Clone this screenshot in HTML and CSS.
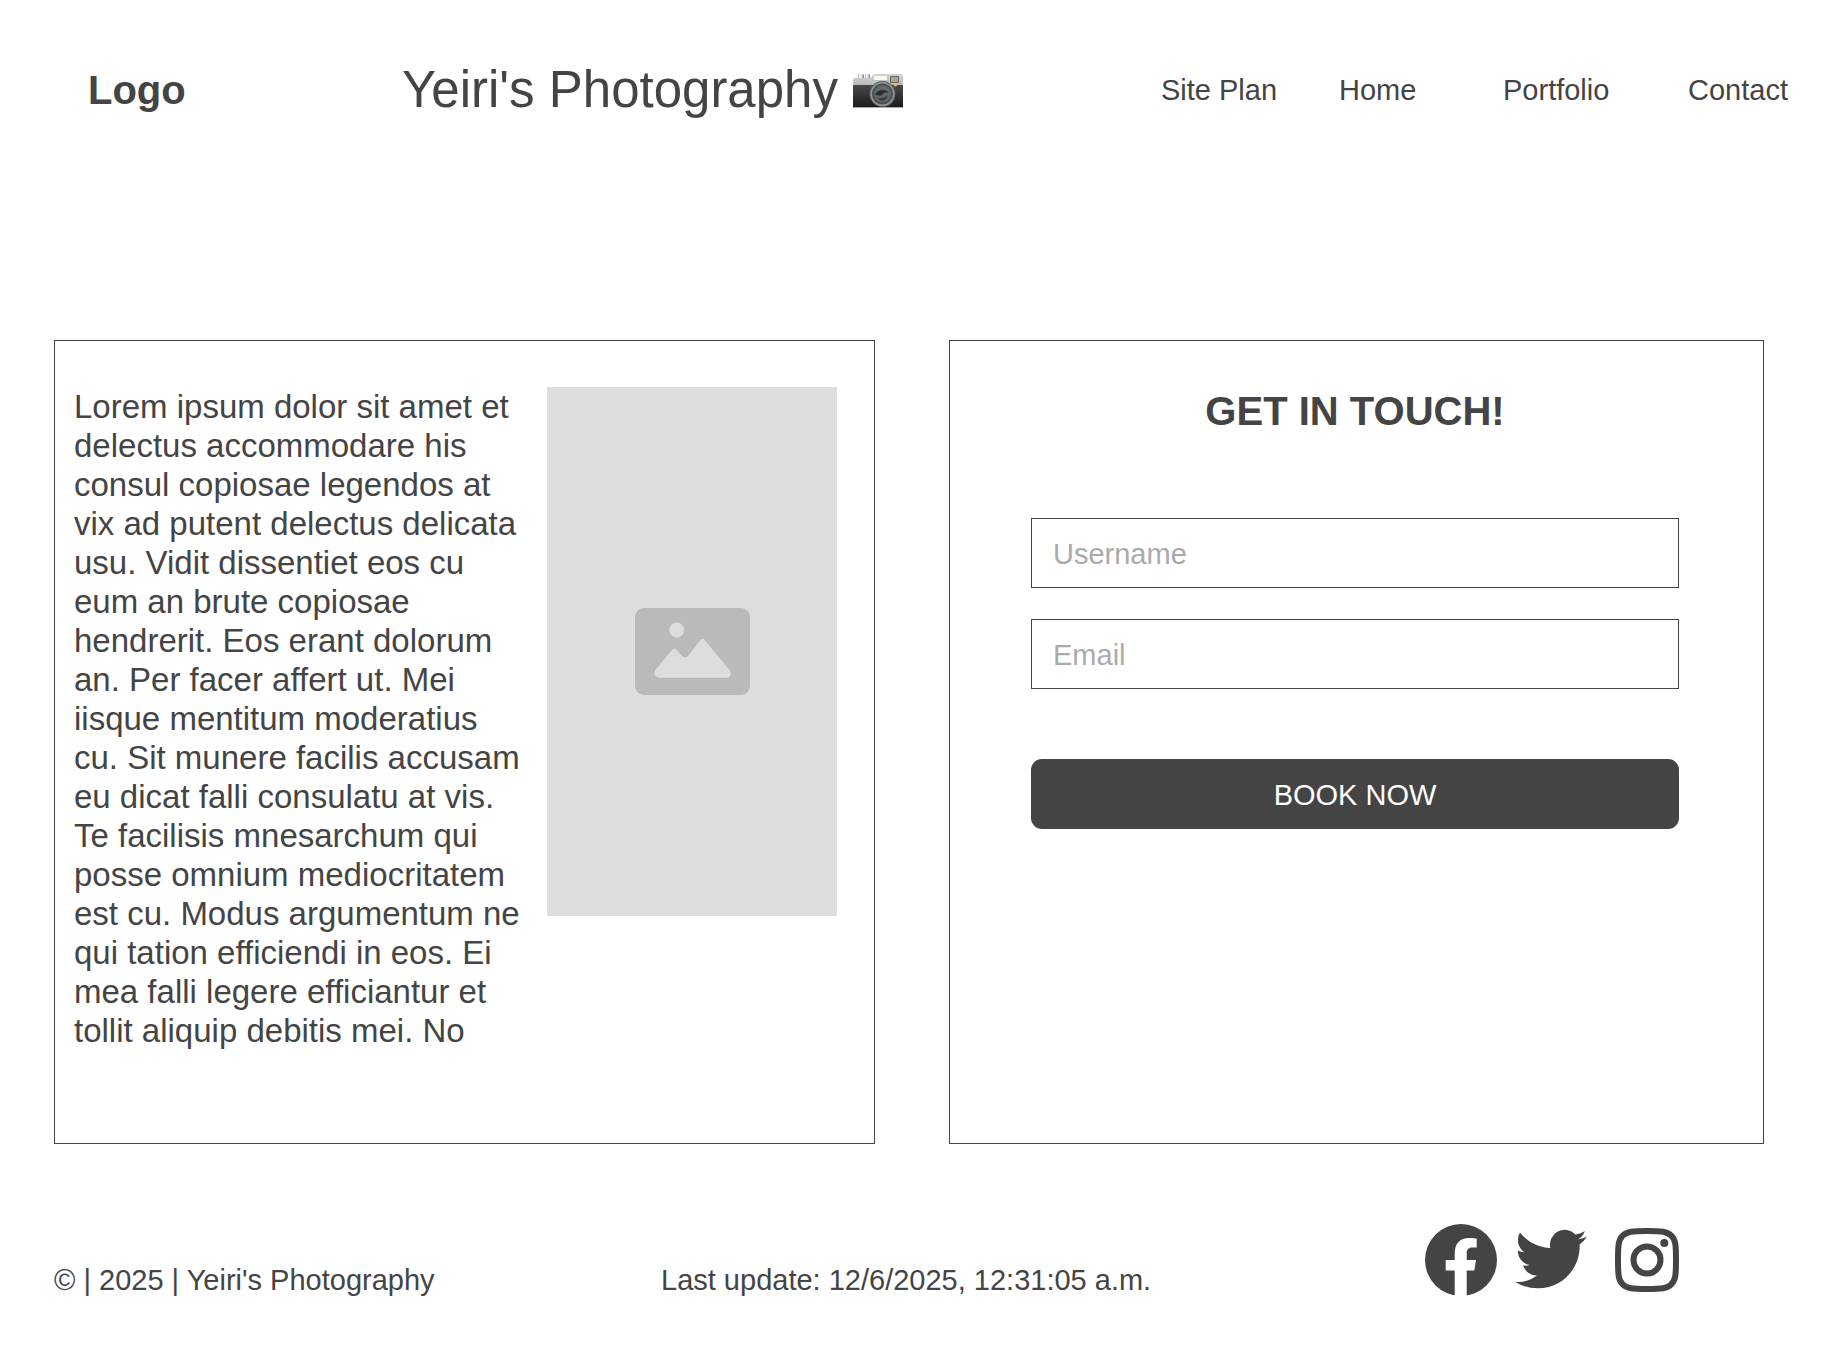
FILE: index.html
```html
<!DOCTYPE html>
<html lang="en">
<head>
<meta charset="utf-8">
<meta name="viewport" content="width=device-width, initial-scale=1">
<title>Yeiri's Photography</title>
<link rel="stylesheet" href="styles.css">
</head>
<body>
<header class="site-header">
  <a class="logo" href="#">Logo</a>
  <h1 class="site-title">Yeiri's Photography
    <svg class="camera" viewBox="0 0 50 34" aria-hidden="true">
      <defs>
        <linearGradient id="chrome" x1="0" y1="0" x2="0" y2="1"><stop offset="0" stop-color="#d4d5d6"/><stop offset="1" stop-color="#b4b6b7"/></linearGradient>
        <linearGradient id="leather" x1="0" y1="0" x2="0" y2="1"><stop offset="0" stop-color="#484848"/><stop offset="1" stop-color="#1a1a1a"/></linearGradient>
      </defs>
      <path fill="url(#chrome)" d="M0 6Q0 4 2 4H17L20 1Q21 0 23 0H48Q50 0 50 2V12H0Z"/>
      <path fill="#b9bbbc" d="M5 0h6v4H5zM12 0h5v4h-5z"/>
      <path fill="#ececec" d="M6 0h3v4H6zM13 0h2v4h-2z"/>
      <path fill="#8b8d8e" d="M10 1h1v3h-1zM16 1h1v3h-1z"/>
      <rect y="11" width="50" height="23" rx="1" fill="url(#leather)"/>
      <path fill="#a8a8a8" d="M0 33h50v1H0z"/>
      <rect x="21" y="2" width="13" height="4" rx="1" fill="#fbf8ec"/>
      <rect x="37" y="2" width="9" height="7" rx="1" fill="#6b6561"/>
      <rect x="38" y="3" width="7" height="5" fill="#aaa39d"/>
      <circle cx="29.500" cy="20" r="13" fill="#5e6264"/>
      <circle cx="29.500" cy="20" r="12" fill="#8f9395"/>
      <circle cx="29.500" cy="20" r="10.500" fill="#4b4f51"/>
      <circle cx="29.500" cy="20" r="8.500" fill="#64696c"/>
      <path d="M22 20q6-7 14-2q-5 0-7 3q-3 2-7-1z" fill="#2a2d2f"/>
      <path d="M24 23q6 3 11-2q-2 6-6 6q-4-1-5-4z" fill="#3b3f41"/>
      <circle cx="42.500" cy="11" r="1.500" fill="#f5bd2d"/>
    </svg>
  </h1>
  <nav class="site-nav" aria-label="Main">
    <a href="#">Site Plan</a>
    <a href="#">Home</a>
    <a href="#">Portfolio</a>
    <a href="#">Contact</a>
  </nav>
</header>

<main class="panels">
  <section class="panel about">
    <p class="about-text">Lorem ipsum dolor sit amet et delectus accommodare his consul copiosae legendos at vix ad putent delectus delicata usu. Vidit dissentiet eos cu eum an brute copiosae hendrerit. Eos erant dolorum an. Per facer affert ut. Mei iisque mentitum moderatius cu. Sit munere facilis accusam eu dicat falli consulatu at vis. Te facilisis mnesarchum qui posse omnium mediocritatem est cu. Modus argumentum ne qui tation efficiendi in eos. Ei mea falli legere efficiantur et tollit aliquip debitis mei. No</p>
    <div class="picture" role="img" aria-label="Image placeholder">
      <svg class="picture-icon" viewBox="0 0 115 87" aria-hidden="true">
        <rect width="115" height="87" rx="9" fill="#bababa"/>
        <circle cx="41.700" cy="22" r="7.400" fill="#ddd"/>
        <path fill="#ddd" d="M20 62.500L37 42Q39.300 39 41.600 42L47.500 48.500Q50 50.500 52.500 48.500L65 32.500Q67.400 29 70 32.500L95 62.500Q97.500 67 93 69.700H23.500Q17.500 68 20 62.500Z"/>
      </svg>
    </div>
  </section>

  <section class="panel contact">
    <h2 class="contact-title">GET IN TOUCH!</h2>
    <form class="contact-form">
      <input class="field" type="text" name="username" placeholder="Username" aria-label="Username">
      <input class="field" type="email" name="email" placeholder="Email" aria-label="Email">
      <button class="submit" type="button">BOOK NOW</button>
    </form>
  </section>
</main>

<footer class="site-footer">
  <p>© | 2025 | Yeiri's Photography</p>
  <p>Last update: 12/6/2025, 12:31:05 a.m.</p>
  <div class="social">
    <a href="#" aria-label="Facebook">
      <svg width="72" height="72" viewBox="0 0 72 72">
        <circle cx="36" cy="36" r="36" fill="#444"/>
        <path fill="#fff" d="M29.700 72V46.500H20.700V36H29.700V30C29.700 19 35 14 44 14C47 14 50 14.300 51.700 14.600V23.400H47.500C43 23.400 41.700 26 41.700 29V36H51L49.300 46.500H41.700V72Z"/>
      </svg>
    </a>
    <a href="#" aria-label="Twitter">
      <svg width="72" height="72" viewBox="0 0.300 24 24">
        <path fill="#444" d="M23.953 4.570a10 10 0 0 1-2.825.775 4.958 4.958 0 0 0 2.163-2.723c-.951.555-2.005.959-3.127 1.184a4.920 4.920 0 0 0-8.384 4.482C7.690 8.095 4.067 6.130 1.640 3.162a4.822 4.822 0 0 0-.666 2.475c0 1.710.870 3.213 2.188 4.096a4.904 4.904 0 0 1-2.228-.616v.060a4.923 4.923 0 0 0 3.946 4.827 4.996 4.996 0 0 1-2.212.085 4.936 4.936 0 0 0 4.604 3.417 9.867 9.867 0 0 1-6.102 2.105c-.390 0-.779-.023-1.170-.067a13.995 13.995 0 0 0 7.557 2.209c9.053 0 13.998-7.496 13.998-13.985 0-.210 0-.420-.015-.630A9.935 9.935 0 0 0 24 4.590z"/>
      </svg>
    </a>
    <a href="#" aria-label="Instagram">
      <svg width="84" height="72" viewBox="-10 -4 84 72" fill="none" stroke="#444" stroke-width="6">
        <path d="M32 3C47 3 52 3.400 56.300 7.700C60.600 12 61 17 61 32C61 47 60.600 52 56.300 56.300C52 60.600 47 61 32 61C17 61 12 60.600 7.700 56.300C3.400 52 3 47 3 32C3 17 3.400 12 7.700 7.700C12 3.400 17 3 32 3Z"/>
        <circle cx="32" cy="32" r="13.500"/>
        <circle cx="49.300" cy="15" r="4" fill="#444" stroke="none"/>
      </svg>
    </a>
  </div>
</footer>
</body>
</html>
```
FILE: styles.css
```css
*,
*::before,
*::after {
  box-sizing: border-box;
}

body {
  margin: 0;
  background: #fff;
  color: #444;
  font-family: "Liberation Sans", Arial, sans-serif;
  font-size: 29px;
  line-height: 32px;
}

a {
  color: inherit;
  text-decoration: none;
}

h1,
h2,
p {
  margin: 0;
}

/* Header */
.site-header {
  display: grid;
  grid-template-columns: 314fr 759fr 629fr;
  align-items: center;
  padding: 61px 48px 59px 88px;
}

.logo {
  font-size: 40px;
  font-weight: bold;
  line-height: 46px;
}

.site-title {
  display: flex;
  align-items: center;
  gap: 15px;
  font-size: 51px;
  font-weight: normal;
  line-height: 58px;
  white-space: nowrap;
}

.camera {
  width: 50px;
  height: 34px;
  margin-top: 2px;
}

.site-nav {
  display: grid;
  grid-template-columns: 178fr 164fr 185fr 102fr;
  white-space: nowrap;
}

/* Panels */
.panels {
  display: grid;
  grid-template-columns: 821fr 815fr;
  gap: 74px;
  padding: 162px 74px 80px 54px;
}

.panel {
  min-height: 804px;
  border: 1px solid #444;
}

.about {
  display: grid;
  grid-template-columns: 1fr 290px;
  align-items: start;
  gap: 20px;
  padding: 46px 37px 46px 19px;
}

.about-text {
  font-size: 33px;
  line-height: 39px;
}

.picture {
  display: flex;
  align-items: center;
  justify-content: center;
  aspect-ratio: 290 / 529;
  background: #ddd;
}

.picture-icon {
  width: 115px;
  height: 87px;
}

.contact {
  padding: 47px 84px 47px 81px;
}

.contact-title {
  margin-bottom: 84px;
  font-size: 40px;
  line-height: 46px;
  text-align: center;
}

.contact-form {
  display: flex;
  flex-direction: column;
  gap: 31px;
}

.field,
.submit {
  width: 100%;
  height: 70px;
  padding: 2px 21px 0;
  font: inherit;
}

.field {
  border: 1px solid #444;
  border-radius: 0;
  background: #fff;
  color: #444;
}

.field::placeholder {
  color: #aaa;
  opacity: 1;
}

.submit {
  margin-top: 39px;
  border: 0;
  border-radius: 11px;
  background: #444;
  color: #fff;
}

/* Footer */
.site-footer {
  display: grid;
  grid-template-columns: 607fr 764fr 413fr;
  align-items: end;
  padding: 0 0 52px 54px;
}

.social {
  display: flex;
  gap: 18px;
}

.social svg {
  display: block;
}
```
